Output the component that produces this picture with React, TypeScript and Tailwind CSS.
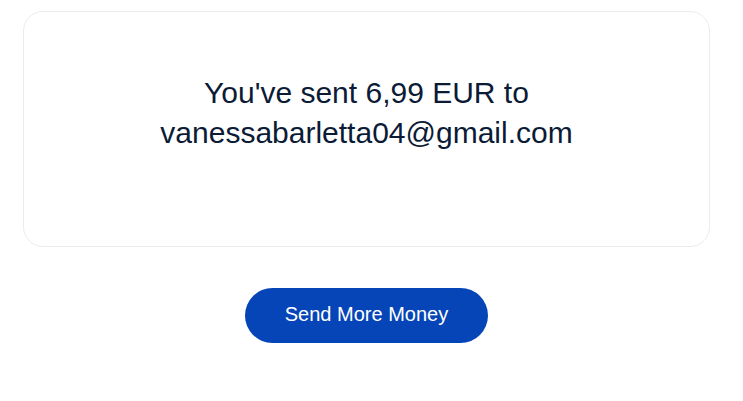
export default function App() {
  return (
    <div className="min-h-[401px] bg-white pt-[11px] font-['Liberation_Sans',Arial,sans-serif]">
      <section className="ml-[23px] flex h-[236px] w-[687px] flex-col items-center rounded-[20px] border border-[#ececec] bg-white pt-[61px]">
        <p className="text-center text-[30px] leading-[40px] text-[#0b1b36]">
          You've sent 6,99 EUR to
          <br />
          vanessabarletta04@gmail.com
        </p>
      </section>
      <div className="mt-[41px] flex justify-center">
        <button
          type="button"
          className="ml-[-10px] h-[55px] w-[243px] rounded-full bg-[#0645b7] pb-[3px] text-[20px] text-white"
        >
          Send More Money
        </button>
      </div>
    </div>
  );
}
